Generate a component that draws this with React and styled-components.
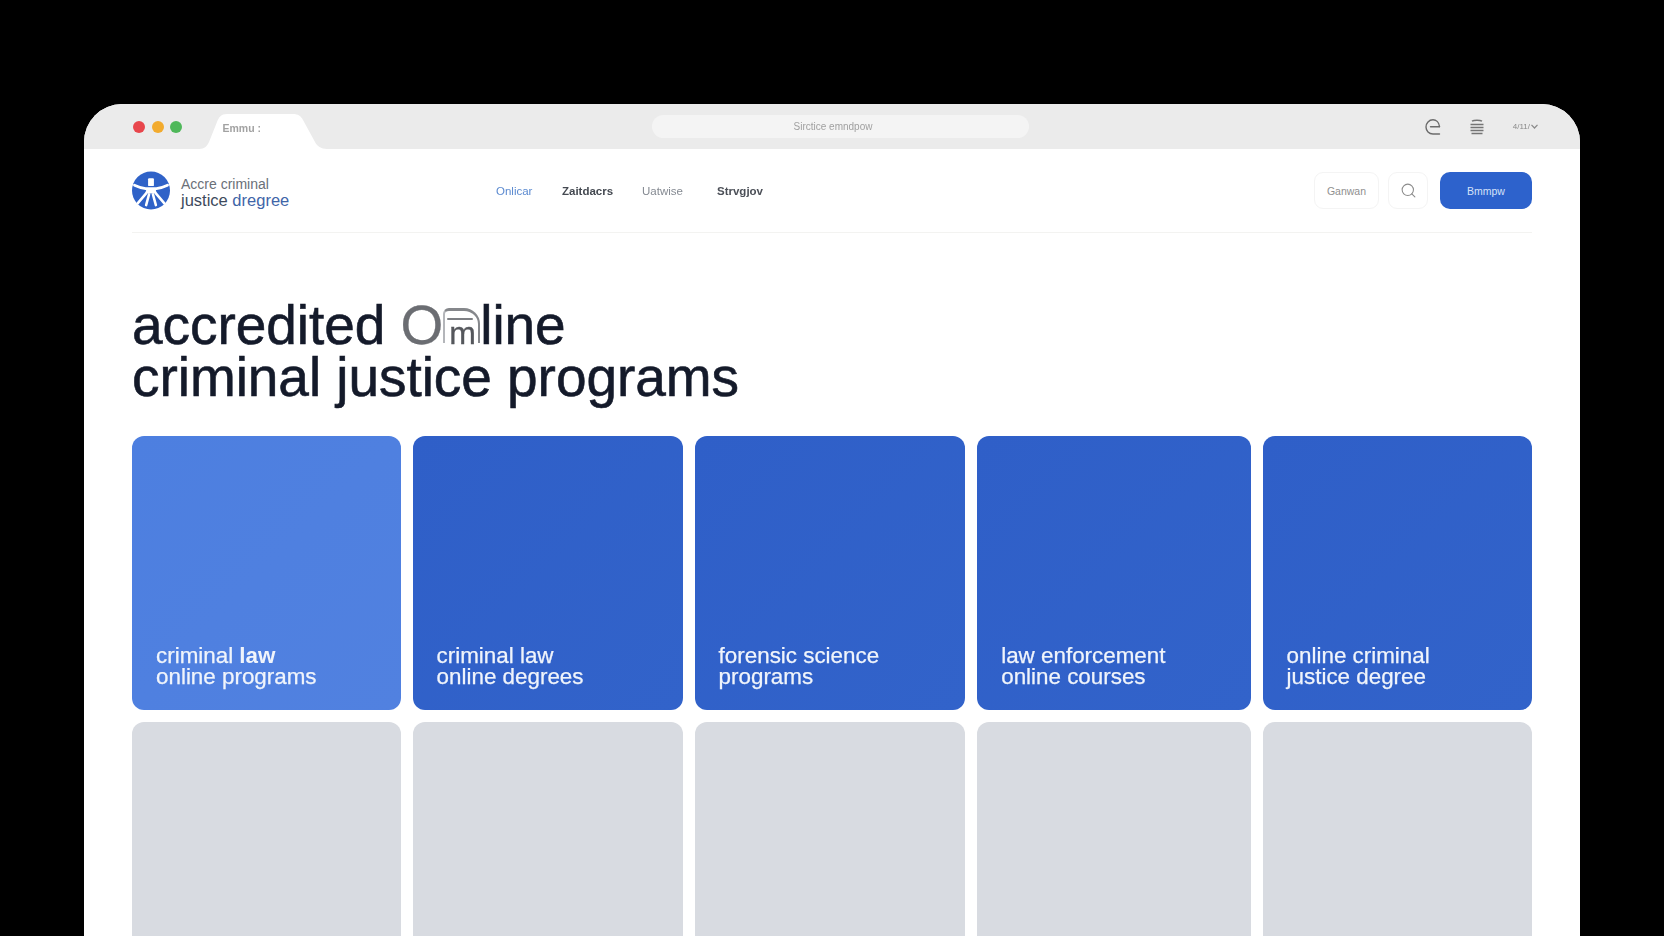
import React from "react";
import styled, { createGlobalStyle } from "styled-components";
import { Search } from "lucide-react";

const Global = createGlobalStyle`
  html, body { margin: 0; padding: 0; background: #000; height: 936px; overflow: hidden; }
  * { box-sizing: border-box; }
  #root { height: 936px; overflow: hidden; }
`;
const Stage = styled.div`
  height: 936px;
  padding: 104px 84px 0 84px;
  background: #000;
  font-family: "Liberation Sans", Arimo, sans-serif;
`;
const Frame = styled.div`
  width: 1496px;
  height: 832px;
  background: #fff;
  border-radius: 38px 38px 0 0;
  overflow: hidden;
`;
const Chrome = styled.div`
  height: 45px;
  background: #ebebeb;
  display: grid;
  grid-template-columns: 568px 377px 1fr;
  align-items: center;
  position: relative;
`;
const ChromeLeft = styled.div`
  display: flex;
  align-items: center;
  height: 100%;
  padding-left: 49px;
`;
const Dot = styled.span`
  width: 12px;
  height: 12px;
  border-radius: 50%;
  background: ${(p) => p.$c};
  margin-right: 6.5px;
  flex: none;
`;
const Tab = styled.div`
  position: relative;
  width: 128px;
  height: 35px;
  margin: 10px 0 0 10px;
  align-self: flex-start;
  display: flex;
  align-items: center;
  padding: 0 0 8px 24px;
  font-size: 10.5px;
  color: #a2a2a2;
  font-weight: 700;
  svg { position: absolute; inset: 0; }
  span { position: relative; filter: blur(0.4px); }
`;
const UrlBar = styled.div`
  height: 23px;
  border-radius: 12px;
  background: #f4f4f4;
  display: flex;
  align-items: center;
  justify-content: center;
  padding-right: 15px;
  font-size: 10px;
  color: #a0a0a0;
  span { filter: blur(0.4px); }
`;
const ChromeRight = styled.div`
  display: flex;
  align-items: center;
  justify-content: flex-end;
  padding-right: 42px;
  color: #707070;
`;
const IconSlot = styled.span`
  display: flex;
  margin-right: ${(p) => p.$mr}px;
`;
const Version = styled.span`
  font-size: 8px;
  color: #8a8a8a;
  filter: blur(0.3px);
  display: flex;
  align-items: center;
  gap: 1px;
`;
const Page = styled.div`
  padding: 0 48px;
`;
const Header = styled.header`
  height: 84px;
  display: grid;
  grid-template-columns: 364px 1fr auto;
  align-items: center;
  border-bottom: 1px solid #f3f3f1;
`;
const Brand = styled.div`
  display: flex;
  align-items: center;
  gap: 11px;
`;
const BrandText = styled.div`
  font-size: 14px;
  line-height: 16px;
  color: #6a7078;
  margin-top: 3px;
  div + div {
    font-size: 16.5px;
    color: #3d4a5c;
  }
  b {
    font-weight: 400;
    color: #3f65a8;
  }
`;
const Nav = styled.nav`
  display: flex;
  align-items: center;
  font-size: 11.5px;
  font-weight: 400;
`;
const NavItem = styled.a`
  color: ${(p) => p.$c};
  font-weight: ${(p) => p.$w || 400};
  width: ${(p) => p.$slot}px;
  flex: none;
  filter: blur(0.35px);
`;
const Actions = styled.div`
  display: flex;
  align-items: center;
`;
const GhostBtn = styled.button`
  height: 37px;
  width: ${(p) => p.$w}px;
  margin-right: ${(p) => p.$mr}px;
  border: 1px solid #f4f4f4;
  border-radius: 9px;
  background: #fff;
  color: #8f8f8f;
  font: 400 10.5px "Liberation Sans", sans-serif;
  display: flex;
  align-items: center;
  justify-content: center;
  padding: 0;
`;
const PrimaryBtn = styled.button`
  height: 37px;
  width: 92px;
  border: 0;
  border-radius: 10px;
  background: #2d62cc;
  color: #d6e2f8;
  font: 400 10.5px "Liberation Sans", sans-serif;
  padding: 0;
`;
const Title = styled.h1`
  margin: 66px 0 0;
  font-size: 55px;
  line-height: 52px;
  font-weight: 400;
  letter-spacing: -0.05px;
  color: #141a2a;
  -webkit-text-stroke: 0.6px #141a2a;
  filter: blur(0.3px);
`;
const Ghost = styled.span`
  color: #6b6d72;
  -webkit-text-stroke: 0.3px #6b6d72;
`;
const GlitchM = styled.span`
  position: relative;
  display: inline-block;
  width: 37px;
  text-align: center;
  font-size: 32px;
  line-height: 1;
  letter-spacing: -1.5px;
  color: #55575c;
  -webkit-text-stroke: 0.3px #55575c;
  &::before {
    content: "";
    position: absolute;
    left: 0;
    right: 0;
    bottom: 6px;
    height: 32px;
    border: 2px solid #85878b;
    border-top-width: 3px;
    border-bottom: 0;
    border-left-color: #b4b6ba;
    border-radius: 6px 16px 0 0;
  }
  &::after {
    content: "";
    position: absolute;
    left: 4px;
    right: 7px;
    bottom: 29px;
    height: 2px;
    background: #7d7f83;
    border-radius: 2px;
  }
`;
const Grid = styled.div`
  margin-top: 33px;
  display: grid;
  grid-template-columns: 268.6px 270px 270.6px 273.4px 269.4px;
  grid-auto-rows: 274px;
  gap: 12px;
`;
const BlueCard = styled.div`
  border-radius: 12px;
  background: ${(p) =>
    p.$light
      ? "linear-gradient(135deg, #4d7fe0, #5181e0)"
      : "linear-gradient(135deg, #2f5fc8, #3263ca)"};
  color: #f0f4fb;
  display: flex;
  align-items: flex-end;
  padding: 0 24px 23px;
  font-size: 22.4px;
  line-height: 21px;
  font-weight: 400;
  -webkit-text-stroke: 0.25px #f0f4fb;
  b { font-weight: 700; -webkit-text-stroke: 0; }
  div { filter: blur(0.25px); }
`;
const GrayCard = styled.div`
  border-radius: 12px;
  background: #d8dbe1;
`;

const Logo = () => (
  <svg width="38" height="39" viewBox="0 0 39 40">
    <circle cx="19.5" cy="20" r="19.5" fill="#2f62c8" />
    <rect x="16.5" y="7.5" width="6" height="8" rx="1" fill="#fff" />
    <path d="M2.5 14.5 Q9 17.5 14 18 L25 18 Q30 17.5 36.5 14.5" stroke="#fff" strokeWidth="2.8" fill="none" strokeLinecap="round" />
    <path d="M15 18h9l1.5 5h-12z" fill="#fff" />
    <path d="M14.5 23 L6 33 M17.5 24 L14.5 35 M21.5 24 L24.5 35 M24.5 23 L33 33" stroke="#fff" strokeWidth="2.6" strokeLinecap="round" />
  </svg>
);
const RefreshIcon = () => (
  <svg width="18" height="18" viewBox="0 0 18 18" fill="none" stroke="#6c6c6c" strokeWidth="1.4" strokeLinecap="round">
    <path d="M15.5 8.5 C15 4 12 1.8 9 1.8 C5 1.8 2 5 2 9 C2 13 5 16 9 16 L15.5 16" />
    <path d="M6.5 8.8 L15.5 8.8" />
  </svg>
);
const MenuIcon = () => (
  <svg width="16" height="16" viewBox="0 0 16 16" fill="none" stroke="#757575" strokeWidth="1.4">
    <path d="M3 2.2C5 1 11 1 13 2.2" />
    <path d="M1.5 5.5H14.5M1.5 8.5H14.5M1.5 11.5H14.5M2.5 14.5H13.5" />
  </svg>
);
const TabShape = () => (
  <svg width="128" height="35" viewBox="0 0 128 35">
    <path d="M0 35 C6 35 8 32 10 28 L18 8 C20 3 22 0 28 0 L94 0 C99 0 102 2 104 6 L116 28 C118 32 122 35 128 35 Z" fill="#fff" />
  </svg>
);
const Chevron = () => (
  <svg width="7" height="5" viewBox="0 0 7 5" fill="none" stroke="#8a8a8a" strokeWidth="1.2">
    <path d="M0.5 0.8 L3.5 4 L6.5 0.8" />
  </svg>
);

const cards = [
  { a: <>criminal <b>law</b></>, b: "online programs", light: true },
  { a: "criminal law", b: "online degrees" },
  { a: "forensic science", b: "programs" },
  { a: "law enforcement", b: "online courses" },
  { a: "online criminal", b: "justice degree" },
];

export default function App() {
  return (
    <Stage>
      <Global />
      <Frame>
        <Chrome>
          <ChromeLeft>
            <Dot $c="#e8464c" />
            <Dot $c="#f2ab2e" />
            <Dot $c="#4fb85a" />
            <Tab>
              <TabShape />
              <span>Emmu :</span>
            </Tab>
          </ChromeLeft>
          <UrlBar><span>Sirctice emndpow</span></UrlBar>
          <ChromeRight>
            <IconSlot $mr={27}><RefreshIcon /></IconSlot>
            <IconSlot $mr={28}><MenuIcon /></IconSlot>
            <Version>4/11/<Chevron /></Version>
          </ChromeRight>
        </Chrome>
        <Page>
          <Header>
            <Brand>
              <Logo />
              <BrandText>
                <div>Accre criminal</div>
                <div>justice <b>dregree</b></div>
              </BrandText>
            </Brand>
            <Nav>
              <NavItem $c="#5b8ad0" $slot={66}>Onlicar</NavItem>
              <NavItem $c="#454a52" $w={700} $slot={80}>Zaitdacrs</NavItem>
              <NavItem $c="#858a92" $slot={75}>Uatwise</NavItem>
              <NavItem $c="#4c5058" $w={700} $slot={60}>Strvgjov</NavItem>
            </Nav>
            <Actions>
              <GhostBtn $w={65} $mr={9}>Ganwan</GhostBtn>
              <GhostBtn $w={40} $mr={12}><Search size={17} color="#8c8c8c" strokeWidth={1.5} /></GhostBtn>
              <PrimaryBtn>Bmmpw</PrimaryBtn>
            </Actions>
          </Header>
          <Title>
            accredited <Ghost>O</Ghost><GlitchM>m</GlitchM>line
            <br />
            criminal justice programs
          </Title>
          <Grid>
            {cards.map((c, i) => (
              <BlueCard key={i} $light={c.light}>
                <div>{c.a}<br />{c.b}</div>
              </BlueCard>
            ))}
            {cards.map((_, i) => <GrayCard key={i} />)}
          </Grid>
        </Page>
      </Frame>
    </Stage>
  );
}
